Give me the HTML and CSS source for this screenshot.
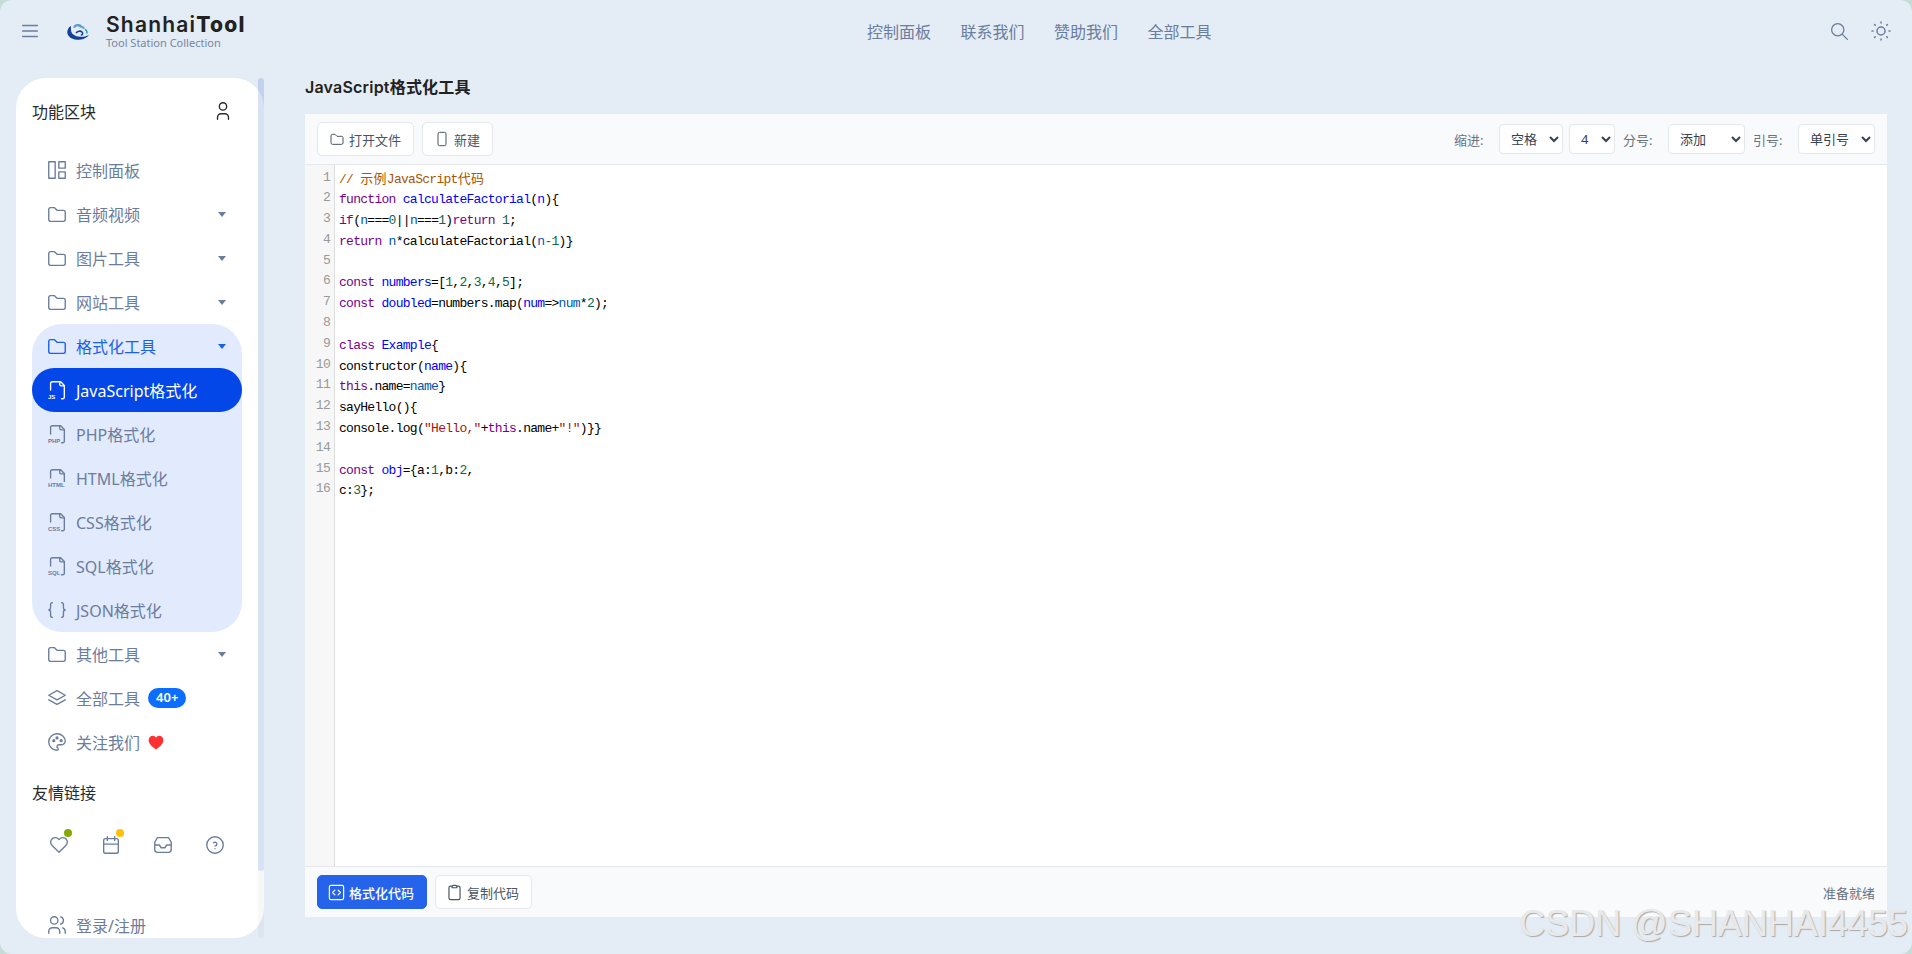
FILE: index.html
```html
<!DOCTYPE html>
<html lang="zh-CN">
<head>
    <meta charset="UTF-8">
    <title>JavaScript格式化工具</title>
    <link rel="stylesheet" href="styles.css">
</head>
<body>
    <svg class="defs" width="0" height="0">
        <symbol id="i-folder" viewBox="0 0 24 24"><path d="M3 7a2 2 0 0 1 2-2h4l3 3h7a2 2 0 0 1 2 2v8a2 2 0 0 1-2 2H5a2 2 0 0 1-2-2z"/></symbol>
        <symbol id="i-file" viewBox="0 0 24 24"><path d="M5 12V5a2 2 0 0 1 2-2h9l4 4v13a1.500 1.500 0 0 1-1.500 1.500H17"/><path d="M15 3v3a1.500 1.500 0 0 0 1.500 1.500H20"/></symbol>
    </svg>
    <div class="page">
        <header class="top">
            <div class="top-left">
                <svg class="ico menu" viewBox="0 0 24 24"><path d="M4 6h16M4 12h16M4 18h16"/></svg>
                <svg class="logo" viewBox="0 0 24 20">
                    <path fill="#5b9bd5" d="M7 7a5 5 0 0 1 5-4 4 4 0 0 1 4 2 3.500 3.500 0 0 1 3 2.500l-2 .5a2 2 0 0 0-2-1.500l-1 .2a2.500 2.500 0 0 0-4.500-.2z"/>
                    <path fill="#12409a" d="M5 5C1.500 7 .5 11 2 14c2 4 8 5.500 13 4.500 3-.6 6-2 8-4.500-3 1.500-6 2-9 1.800C9 15.500 5.500 13 5 9.500 4.800 8 5 6.500 5 5z"/>
                    <path fill="none" stroke="#12409a" stroke-width="1.600" d="M10 12c1.500-2 4.500-2.500 6-1 1.300 1.300.6 3-1.200 3"/>
                    <path fill="none" stroke="#1d9bb8" stroke-width="1.400" d="M19 8.500c2 .8 2.500 2.500 1.500 4"/>
                </svg>
                <div class="brand">
                    <div class="brand-name">Shanhai<b>Tool</b></div>
                    <div class="brand-sub">Tool Station Collection</div>
                </div>
            </div>
            <nav class="top-nav">
                <a>控制面板</a>
                <a>联系我们</a>
                <a>赞助我们</a>
                <a>全部工具</a>
            </nav>
            <div class="top-right">
                <svg class="ico search" viewBox="0 0 24 24"><path d="M3 10a7 7 0 1 0 14 0a7 7 0 1 0-14 0M21 21l-6-6"/></svg>
                <svg class="ico sun" viewBox="0 0 24 24"><path d="M8 12a4 4 0 1 0 8 0a4 4 0 1 0-8 0M3 12h1M20 12h1M12 3v1M12 20v1M5.600 5.600l.7.7M18.400 5.600l-.7.7M17.700 17.700l.7.7M6.300 17.700l-.7.7"/></svg>
            </div>
        </header>

        <div class="body">
            <aside class="side">
                <div class="side-inner">
                    <div class="side-head">
                        <span>功能区块</span>
                        <svg class="ico" viewBox="0 0 24 24"><path d="M8 7a4 4 0 1 0 8 0a4 4 0 0 0-8 0M6 21v-2a4 4 0 0 1 4-4h4a4 4 0 0 1 4 4v2"/></svg>
                    </div>
                    <a class="item"><svg class="ico" viewBox="0 0 24 24"><path d="M3 3h7v18H3zM14 3h7v7h-7zM14 14h7v7h-7z"/></svg>控制面板</a>
                    <a class="item"><svg class="ico"><use href="#i-folder"/></svg>音频视频<i class="caret"></i></a>
                    <a class="item"><svg class="ico"><use href="#i-folder"/></svg>图片工具<i class="caret"></i></a>
                    <a class="item"><svg class="ico"><use href="#i-folder"/></svg>网站工具<i class="caret"></i></a>
                    <div class="group">
                        <a class="item open"><svg class="ico"><use href="#i-folder"/></svg>格式化工具<i class="caret"></i></a>
                        <a class="item active"><span class="ftype"><svg class="ico"><use href="#i-file"/></svg><em>JS</em></span>JavaScript格式化</a>
                        <a class="item"><span class="ftype"><svg class="ico"><use href="#i-file"/></svg><em>PHP</em></span>PHP格式化</a>
                        <a class="item"><span class="ftype"><svg class="ico"><use href="#i-file"/></svg><em>HTML</em></span>HTML格式化</a>
                        <a class="item"><span class="ftype"><svg class="ico"><use href="#i-file"/></svg><em>CSS</em></span>CSS格式化</a>
                        <a class="item"><span class="ftype"><svg class="ico"><use href="#i-file"/></svg><em>SQL</em></span>SQL格式化</a>
                        <a class="item"><svg class="ico" viewBox="0 0 24 24"><path d="M7 4a2 2 0 0 0-2 2v3a2 3 0 0 1-2 3a2 3 0 0 1 2 3v3a2 2 0 0 0 2 2M17 4a2 2 0 0 1 2 2v3a2 3 0 0 0 2 3a2 3 0 0 0-2 3v3a2 2 0 0 1-2 2"/></svg>JSON格式化</a>
                    </div>
                    <a class="item"><svg class="ico"><use href="#i-folder"/></svg>其他工具<i class="caret"></i></a>
                    <a class="item"><svg class="ico" viewBox="0 0 24 24"><path d="M12 4 3 9l9 5 9-5zM3 14l9 5 9-5"/></svg>全部工具<span class="badge">40+</span></a>
                    <a class="item"><svg class="ico" viewBox="0 0 24 24"><path d="M12 21a9 9 0 0 1 0-18c4.970 0 9 3.580 9 8 0 1.060-.474 2.078-1.318 2.828-.844.75-1.989 1.172-3.182 1.172H14a2 2 0 0 0-1 3.750A1.300 1.300 0 0 1 12 21"/><path d="M7.500 10.500a1 1 0 1 0 2 0a1 1 0 1 0-2 0M11 7.500a1 1 0 1 0 2 0a1 1 0 1 0-2 0M15.500 10.500a1 1 0 1 0 2 0a1 1 0 1 0-2 0"/></svg>关注我们<svg class="love" viewBox="0 0 24 22"><path d="M12 21.500C5 16 1 12.500 1 7.500 1 3.500 4 1 7 1c2 0 4 1 5 3 1-2 3-3 5-3 3 0 6 2.500 6 6.500 0 5-4 8.500-11 14z"/></svg></a>
                    <div class="side-title">友情链接</div>
                    <div class="links">
                        <span class="link"><svg class="ico" viewBox="0 0 24 24"><path d="M19.500 12.570 12 20l-7.500-7.430A5 5 0 1 1 12 6.040a5 5 0 1 1 7.500 6.530"/></svg><i class="dot green"></i></span>
                        <span class="link"><svg class="ico" viewBox="0 0 24 24"><path d="M4 7a2 2 0 0 1 2-2h12a2 2 0 0 1 2 2v12a2 2 0 0 1-2 2H6a2 2 0 0 1-2-2zM16 3v4M8 3v4M4 11h16"/></svg><i class="dot yellow"></i></span>
                        <span class="link"><svg class="ico" viewBox="0 0 24 24"><path d="M3 9l3-5h12l3 5v8a3 3 0 0 1-3 3H6a3 3 0 0 1-3-3zM3 12h5l2 3h4l2-3h5"/></svg></span>
                        <span class="link"><svg class="ico" viewBox="0 0 24 24"><path d="M3 12a9 9 0 1 0 18 0a9 9 0 0 0-18 0M12 16v.01M12 13a2 2 0 0 0 .914-3.782a1.980 1.980 0 0 0-2.414.483"/></svg></span>
                    </div>
                    <a class="item login"><svg class="ico" viewBox="0 0 24 24"><path d="M5 7a4 4 0 1 0 8 0a4 4 0 0 0-8 0M3 21v-2a4 4 0 0 1 4-4h4a4 4 0 0 1 4 4v2M16 3.130a4 4 0 0 1 0 7.750M21 21v-2a4 4 0 0 0-3-3.850"/></svg>登录/注册</a>
                </div>
                <div class="scrollbar"><div class="thumb"></div></div>
            </aside>

            <main class="main">
                <h1 class="page-title">JavaScript格式化工具</h1>
                <section class="card">
                    <div class="toolbar">
                        <button class="btn"><svg class="ico"><use href="#i-folder"/></svg>打开文件</button>
                        <button class="btn"><svg class="ico" viewBox="0 0 24 24"><path d="M6 4a2 2 0 0 1 2-2h8a2 2 0 0 1 2 2v16a2 2 0 0 1-2 2H8a2 2 0 0 1-2-2z"/></svg>新建</button>
                        <div class="opts">
                            <label class="opt-label">缩进:</label>
                            <select class="sel w64"><option>空格</option><option>Tab</option></select>
                            <select class="sel w46"><option>4</option><option>2</option></select>
                            <label class="opt-label">分号:</label>
                            <select class="sel w77"><option>添加</option><option>移除</option></select>
                            <label class="opt-label">引号:</label>
                            <select class="sel w77"><option>单引号</option><option>双引号</option></select>
                        </div>
                    </div>
                    <div class="editor">
                        <div class="gutter">
                            <div>1</div><div>2</div><div>3</div><div>4</div><div>5</div><div>6</div><div>7</div><div>8</div>
                            <div>9</div><div>10</div><div>11</div><div>12</div><div>13</div><div>14</div><div>15</div><div>16</div>
                        </div>
<pre class="code"><span class="c">// <span class="cjk">示例</span>JavaScript<span class="cjk">代码</span></span>
<span class="k">function</span> <span class="d">calculateFactorial</span>(<span class="d">n</span>){
<span class="k">if</span>(<span class="v">n</span>===<span class="n">0</span>||<span class="v">n</span>===<span class="n">1</span>)<span class="k">return</span> <span class="n">1</span>;
<span class="k">return</span> <span class="v">n</span>*calculateFactorial(<span class="v">n</span><span class="n">-1</span>)}

<span class="k">const</span> <span class="d">numbers</span>=[<span class="n">1</span>,<span class="n">2</span>,<span class="n">3</span>,<span class="n">4</span>,<span class="n">5</span>];
<span class="k">const</span> <span class="d">doubled</span>=numbers.map(<span class="d">num</span>=&gt;<span class="v">num</span>*<span class="n">2</span>);

<span class="k">class</span> <span class="d">Example</span>{
constructor(<span class="d">name</span>){
<span class="k">this</span>.name=<span class="v">name</span>}
sayHello(){
console.log(<span class="s">"Hello,"</span>+<span class="k">this</span>.name+<span class="s">"!"</span>)}}

<span class="k">const</span> <span class="d">obj</span>={a:<span class="n">1</span>,b:<span class="n">2</span>,
c:<span class="n">3</span>};</pre>
                    </div>
                    <div class="foot">
                        <button class="btn primary"><svg class="ico" viewBox="0 0 24 24"><path d="M3 5a2 2 0 0 1 2-2h14a2 2 0 0 1 2 2v14a2 2 0 0 1-2 2H5a2 2 0 0 1-2-2zM10 9l-3 3 3 3M14 9l3 3-3 3"/></svg>格式化代码</button>
                        <button class="btn"><svg class="ico" viewBox="0 0 24 24"><path d="M9 4H7a2 2 0 0 0-2 2v13a2 2 0 0 0 2 2h10a2 2 0 0 0 2-2V6a2 2 0 0 0-2-2h-2M9 5a2 2 0 0 1 2-2h2a2 2 0 0 1 2 2v1H9z"/></svg>复制代码</button>
                        <span class="status">准备就绪</span>
                    </div>
                </section>
            </main>
        </div>
        <div class="watermark">CSDN @SHANHAI4455</div>
    </div>
</body>
</html>
```

FILE: styles.css
```css
* {
    box-sizing: border-box;
    margin: 0;
}
html, body {
    height: 100%;
}
body {
    background: #c6dcd6;
    font-family: "Noto Sans", "Noto Sans CJK SC", sans-serif;
    overflow: hidden;
}
.defs {
    position: absolute;
}
.page {
    position: relative;
    height: 954px;
    background: #e4ecf5;
    border-radius: 12px;
    overflow: hidden;
}
.ico {
    width: 22px;
    height: 22px;
    flex: none;
    fill: none;
    stroke: currentColor;
    stroke-width: 1.5;
    stroke-linecap: round;
    stroke-linejoin: round;
}

/* header */
.top {
    display: flex;
    align-items: center;
    height: 62px;
    padding-left: 19px;
    color: #6b7d9c;
}
.top-left {
    display: flex;
    align-items: center;
    width: 848px;
}
.logo {
    width: 24px;
    height: 20px;
    margin-left: 25px;
}
.brand {
    margin-left: 16px;
}
.brand-name {
    font-family: Inter, "Noto Sans", sans-serif;
    font-size: 21px;
    line-height: 22px;
    font-weight: 600;
    letter-spacing: 1.2px;
    color: #222;
}
.brand-name b {
    font-weight: 800;
}
.brand-sub {
    font-size: 11px;
    line-height: 13px;
    color: #76879f;
}
.top-nav {
    display: flex;
    gap: 29.5px;
    font-size: 16px;
}
.top-right {
    display: flex;
    align-items: center;
    gap: 19.5px;
    margin-left: auto;
    padding-right: 19px;
}
.search {
    width: 21px;
    height: 21px;
}
.sun {
    width: 24px;
    height: 24px;
}

/* sidebar */
.body {
    display: flex;
    padding-top: 16px;
}
.side {
    position: relative;
    width: 248px;
    height: 860px;
    margin-left: 16px;
    background: #fff;
    border-radius: 30px;
    flex: none;
}
.side-inner {
    height: 100%;
    padding: 0 22px 0 16px;
    overflow: hidden;
    border-radius: 30px;
}
.side-head {
    display: flex;
    align-items: center;
    justify-content: space-between;
    height: 70px;
    padding: 0 8px 4px 0;
    font-size: 16px;
    color: #2a2a2a;
}
.item {
    display: flex;
    align-items: center;
    height: 44px;
    padding: 0 16px;
    font-size: 16px;
    color: #6b7d9c;
    border-radius: 22px;
    white-space: nowrap;
}
.item > .ico, .ftype {
    margin: 0 8px 0 -2px;
}
.caret {
    width: 0;
    height: 0;
    margin-left: auto;
    border: 4px solid transparent;
    border-top: 5px solid currentColor;
    border-bottom: 0;
}
.group {
    background: #e2eafd;
    border-radius: 30px;
}
.item.open {
    color: #1c5fe8;
}
.item.active {
    background: #0347e8;
    color: #fff;
}
.ftype {
    position: relative;
    display: block;
    width: 22px;
    height: 22px;
}
.ftype em {
    position: absolute;
    left: 2px;
    bottom: 0;
    padding-right: 1px;
    font-family: "Liberation Sans", sans-serif;
    font-size: 6px;
    line-height: 7px;
    font-style: normal;
    font-weight: 700;
    background: #e2eafd;
}
.active .ftype em {
    background: #0347e8;
}
.badge {
    margin-left: 8px;
    padding: 0 8px;
    height: 20px;
    border-radius: 10px;
    background: #0d6efd;
    color: #fff;
    font-size: 13px;
    line-height: 19px;
    font-weight: 600;
}
.love {
    width: 16px;
    height: 15px;
    margin-left: 8px;
    fill: #ff3030;
}
.side-title {
    margin-top: 7px;
    height: 44px;
    line-height: 44px;
    font-size: 16px;
    color: #2a2a2a;
}
.links {
    display: flex;
    gap: 30px;
    padding: 19px 0 0 16px;
    height: 78px;
    color: #6b7d9c;
}
.link {
    position: relative;
    display: block;
    width: 22px;
    height: 22px;
}
.dot {
    position: absolute;
    top: -5px;
    right: -2px;
    width: 8px;
    height: 8px;
    border-radius: 50%;
}
.dot.green {
    background: #84a900;
}
.dot.yellow {
    background: #ffc107;
}
.item.login {
    margin-top: 10px;
}
.scrollbar {
    position: absolute;
    top: 0;
    right: 0;
    bottom: 0;
    width: 6px;
    border-radius: 3px;
    background: rgba(0, 0, 0, .03);
}
.thumb {
    height: 793px;
    border-radius: 3px;
    background: rgba(37, 99, 235, .14);
}

/* main area */
.main {
    flex: 1;
    margin-left: 41px;
    margin-right: 25px;
    min-width: 0;
}
.page-title {
    height: 44px;
    margin-top: -8px;
    font-family: Inter, "Noto Sans", "Noto Sans CJK SC", sans-serif;
    font-size: 16px;
    line-height: 34px;
    font-weight: 600;
    letter-spacing: .2px;
    color: #222;
}
.card {
    display: flex;
    flex-direction: column;
    height: 803px;
    background: #fff;
}
.toolbar, .foot {
    display: flex;
    align-items: center;
    gap: 8px;
    padding: 0 12px;
    background: #f8fafc;
    flex: none;
}
.toolbar {
    height: 51px;
    border-bottom: 1px solid #e5e7eb;
}
.foot {
    height: 51px;
    border-top: 1px solid #e5e7eb;
}
.btn {
    display: flex;
    align-items: center;
    gap: 4px;
    height: 34px;
    padding: 0 12px 0 11px;
    background: #fff;
    border: 1px solid #e5e7eb;
    border-radius: 5px;
    font-family: inherit;
    font-size: 13px;
    color: #4b5563;
}
.btn .ico {
    width: 16px;
    height: 16px;
}
.foot .btn {
    gap: 3px;
    padding-left: 9px;
}
.foot .btn .ico {
    width: 19px;
    height: 19px;
}
.btn.primary {
    background: #2563eb;
    border-color: #2563eb;
    color: #fff;
    font-weight: 500;
}
.opts {
    display: flex;
    align-items: center;
    margin-left: auto;
}
.opt-label {
    width: 32px;
    margin-right: 13px;
    font-size: 13px;
    color: #6b7280;
    white-space: nowrap;
}
.sel {
    height: 30px;
    padding: 0 7px;
    background: #fff;
    border: 1px solid #e5e7eb;
    border-radius: 4px;
    font-family: inherit;
    font-size: 13px;
    color: #374151;
}
.w64 {
    width: 64px;
    margin-right: 6px;
}
.w46 {
    width: 46px;
    margin-right: 8px;
}
.w77 {
    width: 77px;
    margin-right: 8px;
}
.w77:last-child {
    margin-right: 0;
}
.editor {
    display: flex;
    flex: 1;
    min-height: 0;
    font-family: "Liberation Mono", monospace;
    font-size: 13px;
    line-height: 20.8px;
}
.gutter {
    width: 30px;
    padding: 2.5px 4px 0 0;
    background: #f7f7f7;
    border-right: 1px solid #ddd;
    color: #999;
    text-align: right;
    letter-spacing: -.72px;
}
.code {
    padding: 2.5px 0 0 4px;
    font: inherit;
    letter-spacing: -.72px;
    color: #000;
}
.code .k { color: #708; }
.code .d { color: #00f; }
.code .v { color: #05a; }
.code .n { color: #164; }
.code .s { color: #a11; }
.code .c { color: #a50; }
.code .cjk {
    font-family: "Noto Sans CJK SC", sans-serif;
    letter-spacing: .3px;
}
.status {
    margin-left: auto;
    font-size: 13px;
    color: #6b7280;
}
.watermark {
    position: absolute;
    right: 4px;
    bottom: 11px;
    font-family: "Liberation Sans", sans-serif;
    font-size: 36px;
    line-height: 38px;
    color: #e9e9e9;
    text-shadow: 1px 1px 1px #a9a9a9;
    pointer-events: none;
}
```
